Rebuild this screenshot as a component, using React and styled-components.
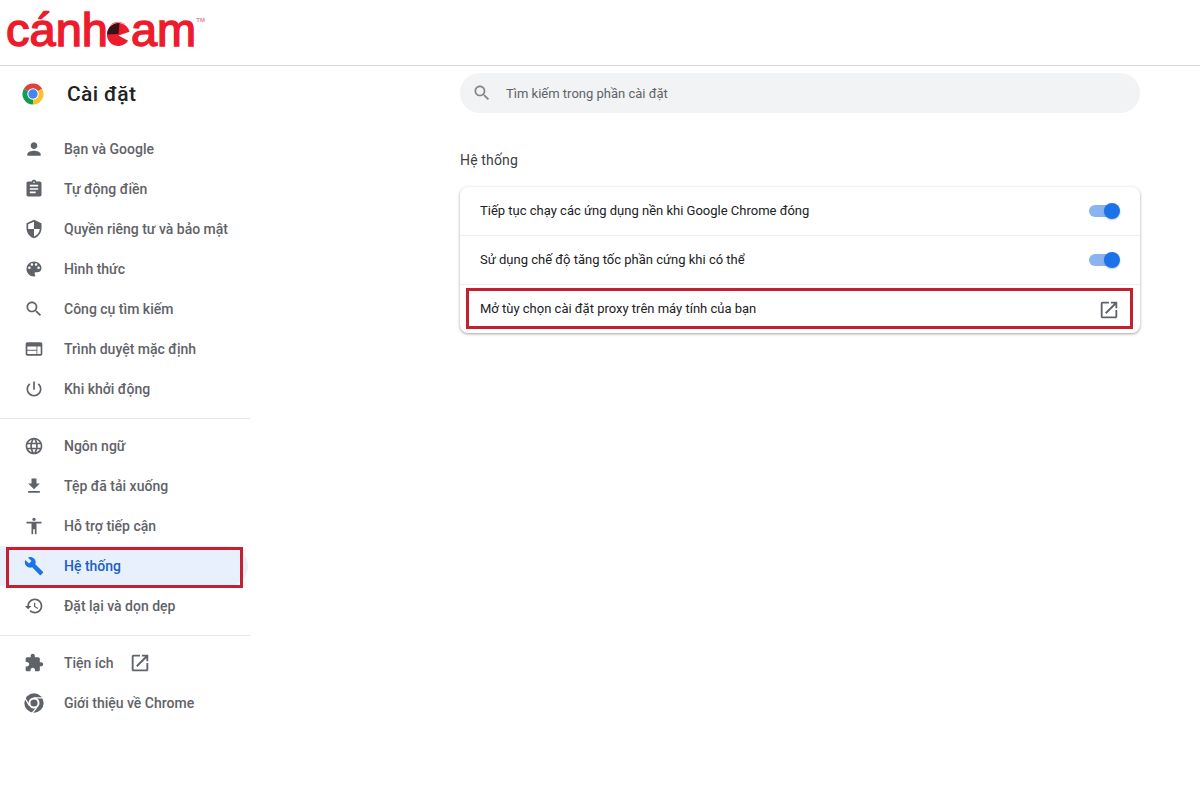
import React from "react";
import styled, { createGlobalStyle } from "styled-components";

const icons = {
  person: "M12 12c2.21 0 4-1.79 4-4s-1.79-4-4-4-4 1.79-4 4 1.79 4 4 4zm0 2c-2.67 0-8 1.34-8 4v2h16v-2c0-2.66-5.33-4-8-4z",
  assignment: "M19 3h-4.18C14.4 1.84 13.3 1 12 1c-1.3 0-2.4.84-2.82 2H5c-1.1 0-2 .9-2 2v14c0 1.1.9 2 2 2h14c1.1 0 2-.9 2-2V5c0-1.1-.9-2-2-2zm-7 0c.55 0 1 .45 1 1s-.45 1-1 1-1-.45-1-1 .45-1 1-1zm2 14H7v-2h7v2zm3-4H7v-2h10v2zm0-4H7V7h10v2z",
  shield: "M12 1L3 5v6c0 5.55 3.84 10.74 9 12 5.16-1.26 9-6.45 9-12V5l-9-4zm0 10.99h7c-.53 4.12-3.28 7.79-7 8.94V12H5V6.3l7-3.11v8.8z",
  palette: "M12 3c-4.97 0-9 4.03-9 9s4.03 9 9 9c.83 0 1.5-.67 1.5-1.5 0-.39-.15-.74-.39-1.01-.23-.26-.38-.61-.38-.99 0-.83.67-1.5 1.5-1.5H16c2.76 0 5-2.24 5-5 0-4.42-4.03-8-9-8zm-5.5 9c-.83 0-1.5-.67-1.5-1.5S5.67 9 6.5 9 8 9.67 8 10.5 7.33 12 6.5 12zm3-4C8.67 8 8 7.33 8 6.5S8.67 5 9.5 5s1.5.67 1.5 1.5S10.33 8 9.5 8zm5 0c-.83 0-1.5-.67-1.5-1.5S13.67 5 14.5 5s1.5.67 1.5 1.5S15.33 8 14.5 8zm3 4c-.83 0-1.5-.67-1.5-1.5S16.67 9 17.5 9s1.5.67 1.5 1.5-.67 1.5-1.5 1.5z",
  search: "M15.5 14h-.79l-.28-.27C15.41 12.59 16 11.11 16 9.5 16 5.91 13.09 3 9.5 3S3 5.91 3 9.5 5.91 16 9.5 16c1.61 0 3.09-.59 4.23-1.57l.27.28v.79l5 4.99L20.49 19l-4.99-5zm-6 0C7.01 14 5 11.99 5 9.5S7.01 5 9.5 5 14 7.01 14 9.5 11.99 14 9.5 14z",
  web: "M20 4H4c-1.1 0-1.99.9-1.99 2L2 18c0 1.1.9 2 2 2h16c1.1 0 2-.9 2-2V6c0-1.1-.9-2-2-2zm-5 14H4v-4h11v4zm0-5H4V9h11v4zm5 5h-4V9h4v9z",
  power: "M13 3h-2v10h2V3zm4.83 2.17l-1.42 1.42C17.99 7.86 19 9.81 19 12c0 3.87-3.13 7-7 7s-7-3.13-7-7c0-2.19 1.01-4.14 2.58-5.42L6.17 5.17C4.23 6.82 3 9.26 3 12c0 4.97 4.03 9 9 9s9-4.03 9-9c0-2.74-1.23-5.18-3.17-6.83z",
  language: "M11.99 2C6.47 2 2 6.48 2 12s4.47 10 9.99 10C17.52 22 22 17.52 22 12S17.52 2 11.99 2zm6.93 6h-2.95c-.32-1.25-.78-2.45-1.38-3.56 1.84.63 3.37 1.91 4.33 3.56zM12 4.04c.83 1.2 1.48 2.53 1.91 3.96h-3.82c.43-1.43 1.08-2.76 1.91-3.96zM4.26 14C4.1 13.36 4 12.69 4 12s.1-1.36.26-2h3.38c-.08.66-.14 1.32-.14 2s.06 1.34.14 2H4.26zm.82 2h2.95c.32 1.25.78 2.45 1.38 3.56-1.84-.63-3.37-1.9-4.33-3.56zm2.95-8H5.08c.96-1.66 2.49-2.93 4.33-3.56C8.81 5.55 8.35 6.75 8.03 8zM12 19.96c-.83-1.2-1.48-2.53-1.91-3.96h3.82c-.43 1.43-1.08 2.76-1.91 3.96zM14.34 14H9.66c-.09-.66-.16-1.32-.16-2s.07-1.35.16-2h4.68c.09.65.16 1.32.16 2s-.07 1.34-.16 2zm.25 5.56c.6-1.11 1.06-2.31 1.38-3.56h2.95c-.96 1.65-2.49 2.93-4.33 3.56zM16.36 14c.08-.66.14-1.32.14-2s-.06-1.34-.14-2h3.38c.16.64.26 1.31.26 2s-.1 1.36-.26 2h-3.38z",
  download: "M19 9h-4V3H9v6H5l7 7 7-7zM5 18v2h14v-2H5z",
  accessibility: "M12 2c1.1 0 2 .9 2 2s-.9 2-2 2-2-.9-2-2 .9-2 2-2zm9 7h-6v13h-2v-6h-2v6H9V9H3V7h18v2z",
  build: "M22.7 19l-9.1-9.1c.9-2.3.4-5-1.5-6.9-2-2-5-2.4-7.4-1.3L9 6 6 9 1.6 4.7C.4 7.1.9 10.1 2.9 12.1c1.9 1.9 4.6 2.4 6.9 1.5l9.1 9.1c.4.4 1 .4 1.4 0l2.3-2.3c.5-.4.5-1.1.1-1.4z",
  restore: "M13 3c-4.97 0-9 4.03-9 9H1l3.89 3.89.07.14L9 12H6c0-3.87 3.13-7 7-7s7 3.13 7 7-3.13 7-7 7c-1.93 0-3.68-.79-4.94-2.06l-1.42 1.42C8.27 19.99 10.51 21 13 21c4.97 0 9-4.03 9-9s-4.03-9-9-9zm-1 5v5l4.28 2.54.72-1.21-3.5-2.08V8H12z",
  extension: "M20.5 11H19V7c0-1.1-.9-2-2-2h-4V3.5C13 2.12 11.88 1 10.5 1S8 2.12 8 3.5V5H4c-1.1 0-1.99.9-1.99 2v3.8H3.5c1.49 0 2.7 1.21 2.7 2.7s-1.21 2.7-2.7 2.7H2V20c0 1.1.9 2 2 2h3.8v-1.5c0-1.49 1.21-2.7 2.7-2.7 1.49 0 2.7 1.21 2.7 2.7V22H17c1.1 0 2-.9 2-2v-4h1.5c1.38 0 2.5-1.12 2.5-2.5S21.88 11 20.5 11z",
  open: "M19 19H5V5h7V3H5c-1.11 0-2 .9-2 2v14c0 1.1.89 2 2 2h14c1.1 0 2-.9 2-2v-7h-2v7zM14 3v2h3.59l-9.83 9.83 1.41 1.41L19 6.41V10h2V3h-7z",
};

const GlobalStyle = createGlobalStyle`
  html, body {
    margin: 0;
    background: #fff;
  }
  body {
    font-family: Roboto, "Liberation Sans", sans-serif;
  }
`;

const Page = styled.div`
  width: 1200px;
  height: 800px;
  overflow: hidden;
  display: flex;
  flex-direction: column;
  background: #fff;
`;

const TopBar = styled.header`
  height: 65px;
  box-sizing: content-box;
  flex: none;
  display: flex;
  align-items: flex-start;
  padding-left: 6px;
  border-bottom: 1px solid #d8d8d8;
`;

const Logo = styled.div`
  display: flex;
  margin-top: 5px;
  font-family: "Liberation Sans", Arial, sans-serif;
  font-weight: 400;
  font-size: 47px;
  line-height: 50px;
  color: #ec1c2c;
  -webkit-text-stroke: 1.5px #ec1c2c;
`;

// the "e" of the logo sits under its round mark
const LogoLetter = styled.span`
  position: relative;
  width: 23px;
  margin: 0 1px 0 -1px;
  font-size: 40px;
  -webkit-text-stroke: 0;
`;

const LogoMark = styled.svg`
  position: absolute;
  left: 0;
  top: 17px;
  width: 23px;
  height: 25px;
`;

const Trademark = styled.sup`
  font-size: 6px;
  line-height: 1;
  color: #d9534f;
  -webkit-text-stroke: 0;
  margin: 12px 0 0 0;
`;

const Body = styled.div`
  flex: 1;
  display: flex;
`;

const Sidebar = styled.nav`
  width: 250px;
  flex: none;
`;

const Brand = styled.div`
  height: 56px;
  margin-bottom: 7px;
  display: flex;
  align-items: center;
  padding-left: 21px;
  gap: 22px;
`;

const BrandLogo = styled.svg`
  width: 24px;
  height: 24px;
  margin-top: -1px;
`;

const BrandTitle = styled.h1`
  margin: 0;
  font-size: 21px;
  font-weight: 500;
  letter-spacing: 0.35px;
  color: #202124;
`;

const NavItem = styled.a`
  position: relative;
  height: 40px;
  display: flex;
  align-items: center;
  gap: 20px;
  padding-left: 24px;
  font-size: 14px;
  font-weight: 500;
  color: ${(p) => (p.$active ? "#1a5fc4" : "#5f6368")};
  background: ${(p) => (p.$active ? "#e8f0fe" : "transparent")};
  border-radius: 0 20px 20px 0;
  width: ${(p) => (p.$active ? "248px" : "auto")};
  box-sizing: border-box;

  ${(p) =>
    p.$active &&
    `&::after {
      content: "";
      position: absolute;
      left: 6px;
      top: 1px;
      width: 237px;
      height: 41px;
      box-sizing: border-box;
      border: 3px solid #c5202f;
    }`}
`;

const Icon = styled.svg`
  width: ${(p) => p.$size || 20}px;
  height: ${(p) => p.$size || 20}px;
  flex: none;
  fill: ${(p) => p.$color || "#5f6368"};
`;

const ExtensionLink = styled(Icon)`
  margin-left: -5px;
`;

const RowLink = styled(Icon)`
  margin-top: 2px;
`;

const Divider = styled.div`
  height: 1px;
  margin: 9px 0 7px;
  background: #e6e6e6;
`;

const Main = styled.main`
  width: 680px;
  margin-left: 210px;
  padding-top: 7px;
`;

const SearchBox = styled.div`
  height: 40px;
  display: flex;
  align-items: center;
  gap: 14px;
  padding-left: 12px;
  background: #f1f3f4;
  border-radius: 20px;
  font-size: 13px;
  color: #5f6368;
`;

const SectionTitle = styled.h2`
  margin: 38px 0 18px;
  font-size: 14px;
  letter-spacing: 0.15px;
  line-height: 18px;
  font-weight: 400;
  color: #3c4043;
`;

const Card = styled.section`
  background: #fff;
  border-radius: 8px;
  box-shadow: 0 1px 2px rgba(60, 64, 67, 0.3), 0 1px 3px 1px rgba(60, 64, 67, 0.15);
`;

const Row = styled.div`
  position: relative;
  height: 48px;
  display: flex;
  align-items: center;
  justify-content: space-between;
  padding: 0 20px;
  font-size: 13px;
  color: #202124;

  & + & {
    border-top: 1px solid #eeeeee;
  }

  ${(p) =>
    p.$highlight &&
    `&::after {
      content: "";
      position: absolute;
      left: 6px;
      right: 7px;
      top: 3px;
      height: 41px;
      box-sizing: border-box;
      border: 3px solid #c5202f;
    }`}
`;

const RowLabel = styled.span`
  margin-top: -2px;
`;

const Toggle = styled.span`
  position: relative;
  width: 30px;
  height: 12px;
  margin-right: 1px;
  border-radius: 6px;
  background: #8ab4f0;

  &::after {
    content: "";
    position: absolute;
    right: -1px;
    top: -2px;
    width: 16px;
    height: 16px;
    border-radius: 50%;
    background: #1a73e8;
    box-shadow: 0 1px 2px rgba(60, 64, 67, 0.3);
  }
`;

const ChromeLogo = () => (
  <BrandLogo viewBox="0 0 48 48">
    <path d="M24 24L5.800 13.500A21 21 0 0 1 42.200 13.500z" fill="#db4437" />
    <path d="M24 24L42.200 13.500A21 21 0 0 1 24 45z" fill="#fbc02d" />
    <path d="M24 24L24 45A21 21 0 0 1 5.800 13.500z" fill="#0f9d58" />
    <circle cx="24" cy="24" r="11.500" fill="#fff" />
    <circle cx="24" cy="24" r="9.400" fill="#4285f4" />
  </BrandLogo>
);

const ChromeGlyph = () => (
  <Icon viewBox="0 0 24 24">
    <circle cx="12" cy="12" r="11.6" />
    <circle cx="12" cy="12" r="6.600" fill="#fff" />
    <circle cx="12" cy="12" r="4.300" />
    <path d="M12 5.800H23M6.600 15.200L1 6M15.200 17.500L10 24" stroke="#fff" strokeWidth="1.600" fill="none" />
  </Icon>
);

const SvgIcon = ({ name, size, color }) => (
  <Icon viewBox="0 0 24 24" $size={size} $color={color}>
    <path d={icons[name]} />
  </Icon>
);

const groups = [
  [
    ["person", "Bạn và Google"],
    ["assignment", "Tự động điền"],
    ["shield", "Quyền riêng tư và bảo mật"],
    ["palette", "Hình thức"],
    ["search", "Công cụ tìm kiếm"],
    ["web", "Trình duyệt mặc định"],
    ["power", "Khi khởi động"],
  ],
  [
    ["language", "Ngôn ngữ"],
    ["download", "Tệp đã tải xuống"],
    ["accessibility", "Hỗ trợ tiếp cận"],
    ["build", "Hệ thống", true],
    ["restore", "Đặt lại và dọn dẹp"],
  ],
];

export default function App() {
  return (
    <Page>
      <GlobalStyle />
      <TopBar>
        <Logo>
          cánh
          <LogoLetter>
            e
            <LogoMark viewBox="0 0 24 25">
              <circle cx="12" cy="12.500" r="12.500" fill="#fff" />
              <path d="M12 13.500L22 19A12 12 0 1 1 23.500 9.500z" fill="#ec1c2c" />
              <path d="M12 12L0.200 12.500A12 12 0 0 1 13 0.500z" fill="#3a1216" />
            </LogoMark>
          </LogoLetter>
          am
          <Trademark>TM</Trademark>
        </Logo>
      </TopBar>
      <Body>
        <Sidebar>
          <Brand>
            <ChromeLogo />
            <BrandTitle>Cài đặt</BrandTitle>
          </Brand>
          {groups.map((items, i) => (
            <React.Fragment key={i}>
              {items.map(([icon, label, active]) => (
                <NavItem key={label} $active={active}>
                  <SvgIcon name={icon} color={active ? "#1a73e8" : undefined} />
                  {label}
                </NavItem>
              ))}
              <Divider />
            </React.Fragment>
          ))}
          <NavItem>
            <SvgIcon name="extension" />
            Tiện ích
            <ExtensionLink viewBox="0 0 24 24" $size={22}>
              <path d={icons.open} />
            </ExtensionLink>
          </NavItem>
          <NavItem>
            <ChromeGlyph />
            Giới thiệu về Chrome
          </NavItem>
        </Sidebar>
        <Main>
          <SearchBox>
            <SvgIcon name="search" color="#80868b" />
            Tìm kiếm trong phần cài đặt
          </SearchBox>
          <SectionTitle>Hệ thống</SectionTitle>
          <Card>
            <Row>
              <RowLabel>Tiếp tục chạy các ứng dụng nền khi Google Chrome đóng</RowLabel>
              <Toggle />
            </Row>
            <Row>
              <RowLabel>Sử dụng chế độ tăng tốc phần cứng khi có thể</RowLabel>
              <Toggle />
            </Row>
            <Row $highlight>
              <RowLabel>Mở tùy chọn cài đặt proxy trên máy tính của bạn</RowLabel>
              <RowLink viewBox="0 0 24 24" $size={22}>
                <path d={icons.open} />
              </RowLink>
            </Row>
          </Card>
        </Main>
      </Body>
    </Page>
  );
}
